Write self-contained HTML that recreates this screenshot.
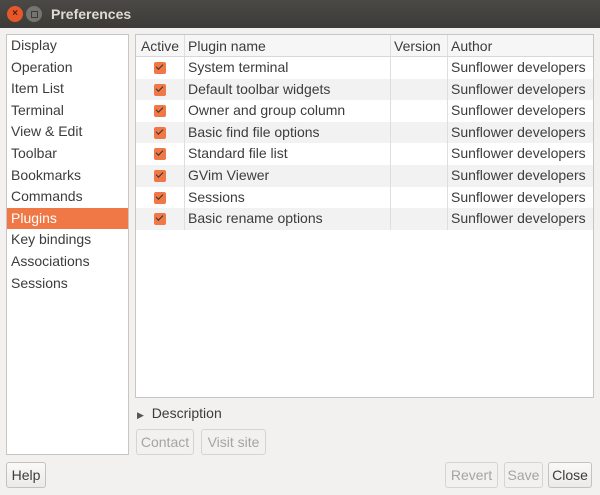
<!DOCTYPE html>
<html><head><meta charset="utf-8"><style>
*{margin:0;padding:0;box-sizing:border-box}
body{width:600px;height:495px;background:#f2f1f0;font-family:"Liberation Sans",sans-serif;font-size:14px;color:#3c3c3c;position:relative;overflow:hidden}
.title{position:absolute;left:0;top:0;width:600px;height:28px;background:linear-gradient(#4a4945,#3c3b37);color:#dfdbd2;font-weight:bold;font-size:14px;line-height:28px;padding-left:51px}
.cl{position:absolute;left:7px;top:6px;width:16px;height:16px;border-radius:50%;background:#e8572a;color:#4a2010;font-size:10px;line-height:16px;text-align:center;font-weight:bold}
.mx{position:absolute;left:26px;top:6px;width:16px;height:16px;border-radius:50%;background:#76746e}
.mx:after{content:"";position:absolute;left:5px;top:5px;width:5px;height:5px;border:1px solid #3c3b37}
.abs{position:absolute}
.left{left:6px;top:34px;width:123px;height:421px;background:#fff;border:1px solid #c8c6c2}
.left div{height:21.6px;line-height:21.6px;padding-left:4px}
.left .sel{background:#f07746;color:#fff}
.tbl{left:135px;top:34px;width:459px;height:364px;background:#fff;border:1px solid #c8c6c2}
.row{position:absolute;left:0;width:457px;height:21.6px;line-height:21.6px}
.row.alt{background:#f2f2f2}
.row span{position:absolute;top:0;height:100%;border-right:1px solid #dedede;padding-left:3px;white-space:nowrap}
.hdr{background:#f6f6f6;border-bottom:1px solid #d8d8d8}
.c1{left:0;width:49px;text-align:center;padding-left:0!important}
.c2{left:49px;width:206px}
.c3{left:255px;width:57px}
.c4{left:312px;width:145px;border-right:none!important}
.chk{display:inline-block;width:12px;height:12px;background:#f07746;border-radius:2px;vertical-align:-2px;position:relative}
.chk:after{content:"";position:absolute;left:2px;top:2px;width:6px;height:3px;border-left:1.5px solid #333;border-bottom:1.5px solid #333;transform:rotate(-45deg)}
.btn{position:absolute;height:26px;line-height:24px;border:1px solid #c4c2be;border-radius:3px;background:linear-gradient(#faf9f8,#eceae8);text-align:center;color:#3c3c3c}
.dis{color:#a6a4a0;border-color:#d6d4d0;background:#f2f1f0}
</style></head><body>
<div class="title">Preferences</div>
<div class="cl">×</div><div class="mx"></div>
<div class="abs left">
<div>Display</div><div>Operation</div><div>Item List</div><div>Terminal</div><div>View &amp; Edit</div><div>Toolbar</div><div>Bookmarks</div><div>Commands</div><div class="sel">Plugins</div><div>Key bindings</div><div>Associations</div><div>Sessions</div>
</div>
<div class="abs tbl">
<div class="row hdr" style="top:0;height:22px;line-height:22px"><span class="c1">Active</span><span class="c2">Plugin name</span><span class="c3">Version</span><span class="c4">Author</span></div>
<div class="row" style="top:22px"><span class="c1"><i class="chk"></i></span><span class="c2">System terminal</span><span class="c3"></span><span class="c4">Sunflower developers</span></div>
<div class="row alt" style="top:43.6px"><span class="c1"><i class="chk"></i></span><span class="c2">Default toolbar widgets</span><span class="c3"></span><span class="c4">Sunflower developers</span></div>
<div class="row" style="top:65.2px"><span class="c1"><i class="chk"></i></span><span class="c2">Owner and group column</span><span class="c3"></span><span class="c4">Sunflower developers</span></div>
<div class="row alt" style="top:86.8px"><span class="c1"><i class="chk"></i></span><span class="c2">Basic find file options</span><span class="c3"></span><span class="c4">Sunflower developers</span></div>
<div class="row" style="top:108.4px"><span class="c1"><i class="chk"></i></span><span class="c2">Standard file list</span><span class="c3"></span><span class="c4">Sunflower developers</span></div>
<div class="row alt" style="top:130px"><span class="c1"><i class="chk"></i></span><span class="c2">GVim Viewer</span><span class="c3"></span><span class="c4">Sunflower developers</span></div>
<div class="row" style="top:151.6px"><span class="c1"><i class="chk"></i></span><span class="c2">Sessions</span><span class="c3"></span><span class="c4">Sunflower developers</span></div>
<div class="row alt" style="top:173.2px"><span class="c1"><i class="chk"></i></span><span class="c2">Basic rename options</span><span class="c3"></span><span class="c4">Sunflower developers</span></div>
</div>
<div class="abs" style="left:137px;top:404px;line-height:18px"><span style="font-size:9px;color:#555">▶</span>&nbsp;&nbsp;Description</div>
<div class="btn dis" style="left:136px;top:429px;width:58px">Contact</div>
<div class="btn dis" style="left:201px;top:429px;width:65px">Visit site</div>
<div class="btn" style="left:6px;top:462px;width:40px">Help</div>
<div class="btn dis" style="left:445px;top:462px;width:53px">Revert</div>
<div class="btn dis" style="left:504px;top:462px;width:39px">Save</div>
<div class="btn" style="left:548px;top:462px;width:44px">Close</div>
</body></html>
